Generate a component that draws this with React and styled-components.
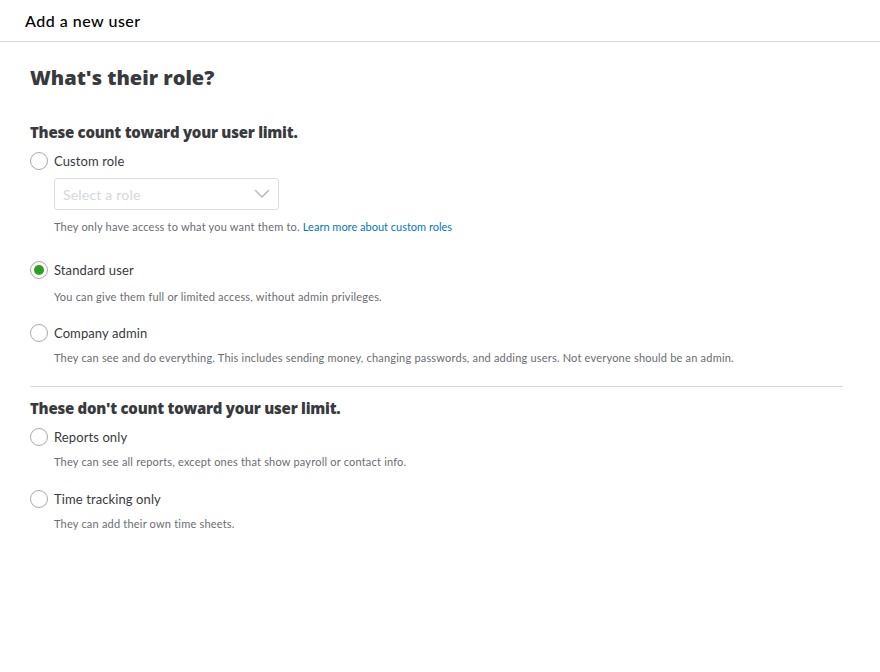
import React from "react";
import styled, { createGlobalStyle } from "styled-components";

const GlobalStyle = createGlobalStyle`
  body {
    margin: 0;
    background: #fff;
    font-family: "Lato", "Noto Sans", sans-serif;
    color: #393a3d;
  }
`;

const Page = styled.div`
  width: 880px;
  min-height: 672px;
  background: #fff;
`;

const Header = styled.div`
  height: 42px;
  box-sizing: border-box;
  border-bottom: 1px solid #d4d7dc;
  padding: 0 25px;
  display: flex;
  align-items: center;
  font-size: 16px;
  letter-spacing: 0.5px;
  font-weight: 500;
  color: #000;
`;

const Body = styled.div`
  padding: 24px 37px 0 30px;
`;

const Title = styled.h1`
  margin: 0 0 32px;
  font-family: "Open Sans", "DejaVu Sans", sans-serif;
  font-size: 20px;
  font-weight: 800;
  color: #393a3d;
  line-height: 24px;
`;

const SectionTitle = styled.h2`
  margin: 0 0 9px;
  font-family: "Open Sans", "DejaVu Sans", sans-serif;
  font-size: 15px;
  font-weight: 800;
  letter-spacing: -0.25px;
  color: #393a3d;
  line-height: 20px;
`;

const Option = styled.div`
  display: flex;
  flex-direction: column;
  margin-bottom: ${(p) => p.$gap || 16}px;
`;

const OptionRow = styled.label`
  display: flex;
  align-items: center;
  gap: 6px;
  height: 20px;
  font-size: 13px;
  letter-spacing: 0.1px;
  color: #393a3d;
`;

const Radio = styled.span`
  width: 18px;
  height: 18px;
  box-sizing: border-box;
  border-radius: 50%;
  border: 1px solid #a6a9ad;
  display: flex;
  align-items: center;
  justify-content: center;
  background: #fff;

  &::after {
    content: "";
    width: 10px;
    height: 10px;
    border-radius: 50%;
    background: ${(p) => (p.$checked ? "#2ca01c" : "transparent")};
  }
`;

const Indent = styled.div`
  padding-left: 24px;
`;

const Help = styled.p`
  margin: ${(p) => p.$top || 8}px 0 0;
  font-size: 11px;
  letter-spacing: 0.2px;
  line-height: 14px;
  color: #6b6c72;
`;

const Link = styled.a`
  color: #0077c5;
  text-decoration: none;
  letter-spacing: 0;
`;

const Select = styled.div`
  margin-top: 7px;
  width: 225px;
  height: 32px;
  box-sizing: border-box;
  border: 1px solid #dcdee1;
  border-radius: 3px;
  display: flex;
  align-items: center;
  justify-content: space-between;
  padding: 0 8px 0 8px;
  font-size: 14px;
  letter-spacing: 0.2px;
  color: #d4d7dc;
`;

const Divider = styled.hr`
  margin: 0 0 11px;
  border: 0;
  border-top: 1px solid #d4d7dc;
`;

const Chevron = () => (
  <svg width="16" height="10" viewBox="0 0 16 10" fill="none">
    <path d="M1.5 1.5L8 8l6.5-6.5" stroke="#b9bcc0" strokeWidth="1.6" strokeLinecap="round" strokeLinejoin="round" />
  </svg>
);

export default function App() {
  return (
    <Page>
      <GlobalStyle />
      <Header>Add a new user</Header>
      <Body>
        <Title>What's their role?</Title>

        <SectionTitle>These count toward your user limit.</SectionTitle>
        <Option $gap={26}>
          <OptionRow>
            <Radio />
            Custom role
          </OptionRow>
          <Indent>
            <Select>
              Select a role
              <Chevron />
            </Select>
            <Help $top={10}>
              They only have access to what you want them to.{" "}
              <Link href="#">Learn more about custom roles</Link>
            </Help>
          </Indent>
        </Option>

        <Option $gap={19}>
          <OptionRow>
            <Radio $checked />
            Standard user
          </OptionRow>
          <Indent>
            <Help $top={10}>You can give them full or limited access, without admin privileges.</Help>
          </Indent>
        </Option>

        <Option $gap={21}>
          <OptionRow>
            <Radio />
            Company admin
          </OptionRow>
          <Indent>
            <Help>
              They can see and do everything. This includes sending money, changing passwords, and adding users. Not everyone should be an admin.
            </Help>
          </Indent>
        </Option>

        <Divider />

        <SectionTitle>These don't count toward your user limit.</SectionTitle>
        <Option $gap={20}>
          <OptionRow>
            <Radio />
            Reports only
          </OptionRow>
          <Indent>
            <Help>They can see all reports, except ones that show payroll or contact info.</Help>
          </Indent>
        </Option>

        <Option>
          <OptionRow>
            <Radio />
            Time tracking only
          </OptionRow>
          <Indent>
            <Help>They can add their own time sheets.</Help>
          </Indent>
        </Option>
      </Body>
    </Page>
  );
}
